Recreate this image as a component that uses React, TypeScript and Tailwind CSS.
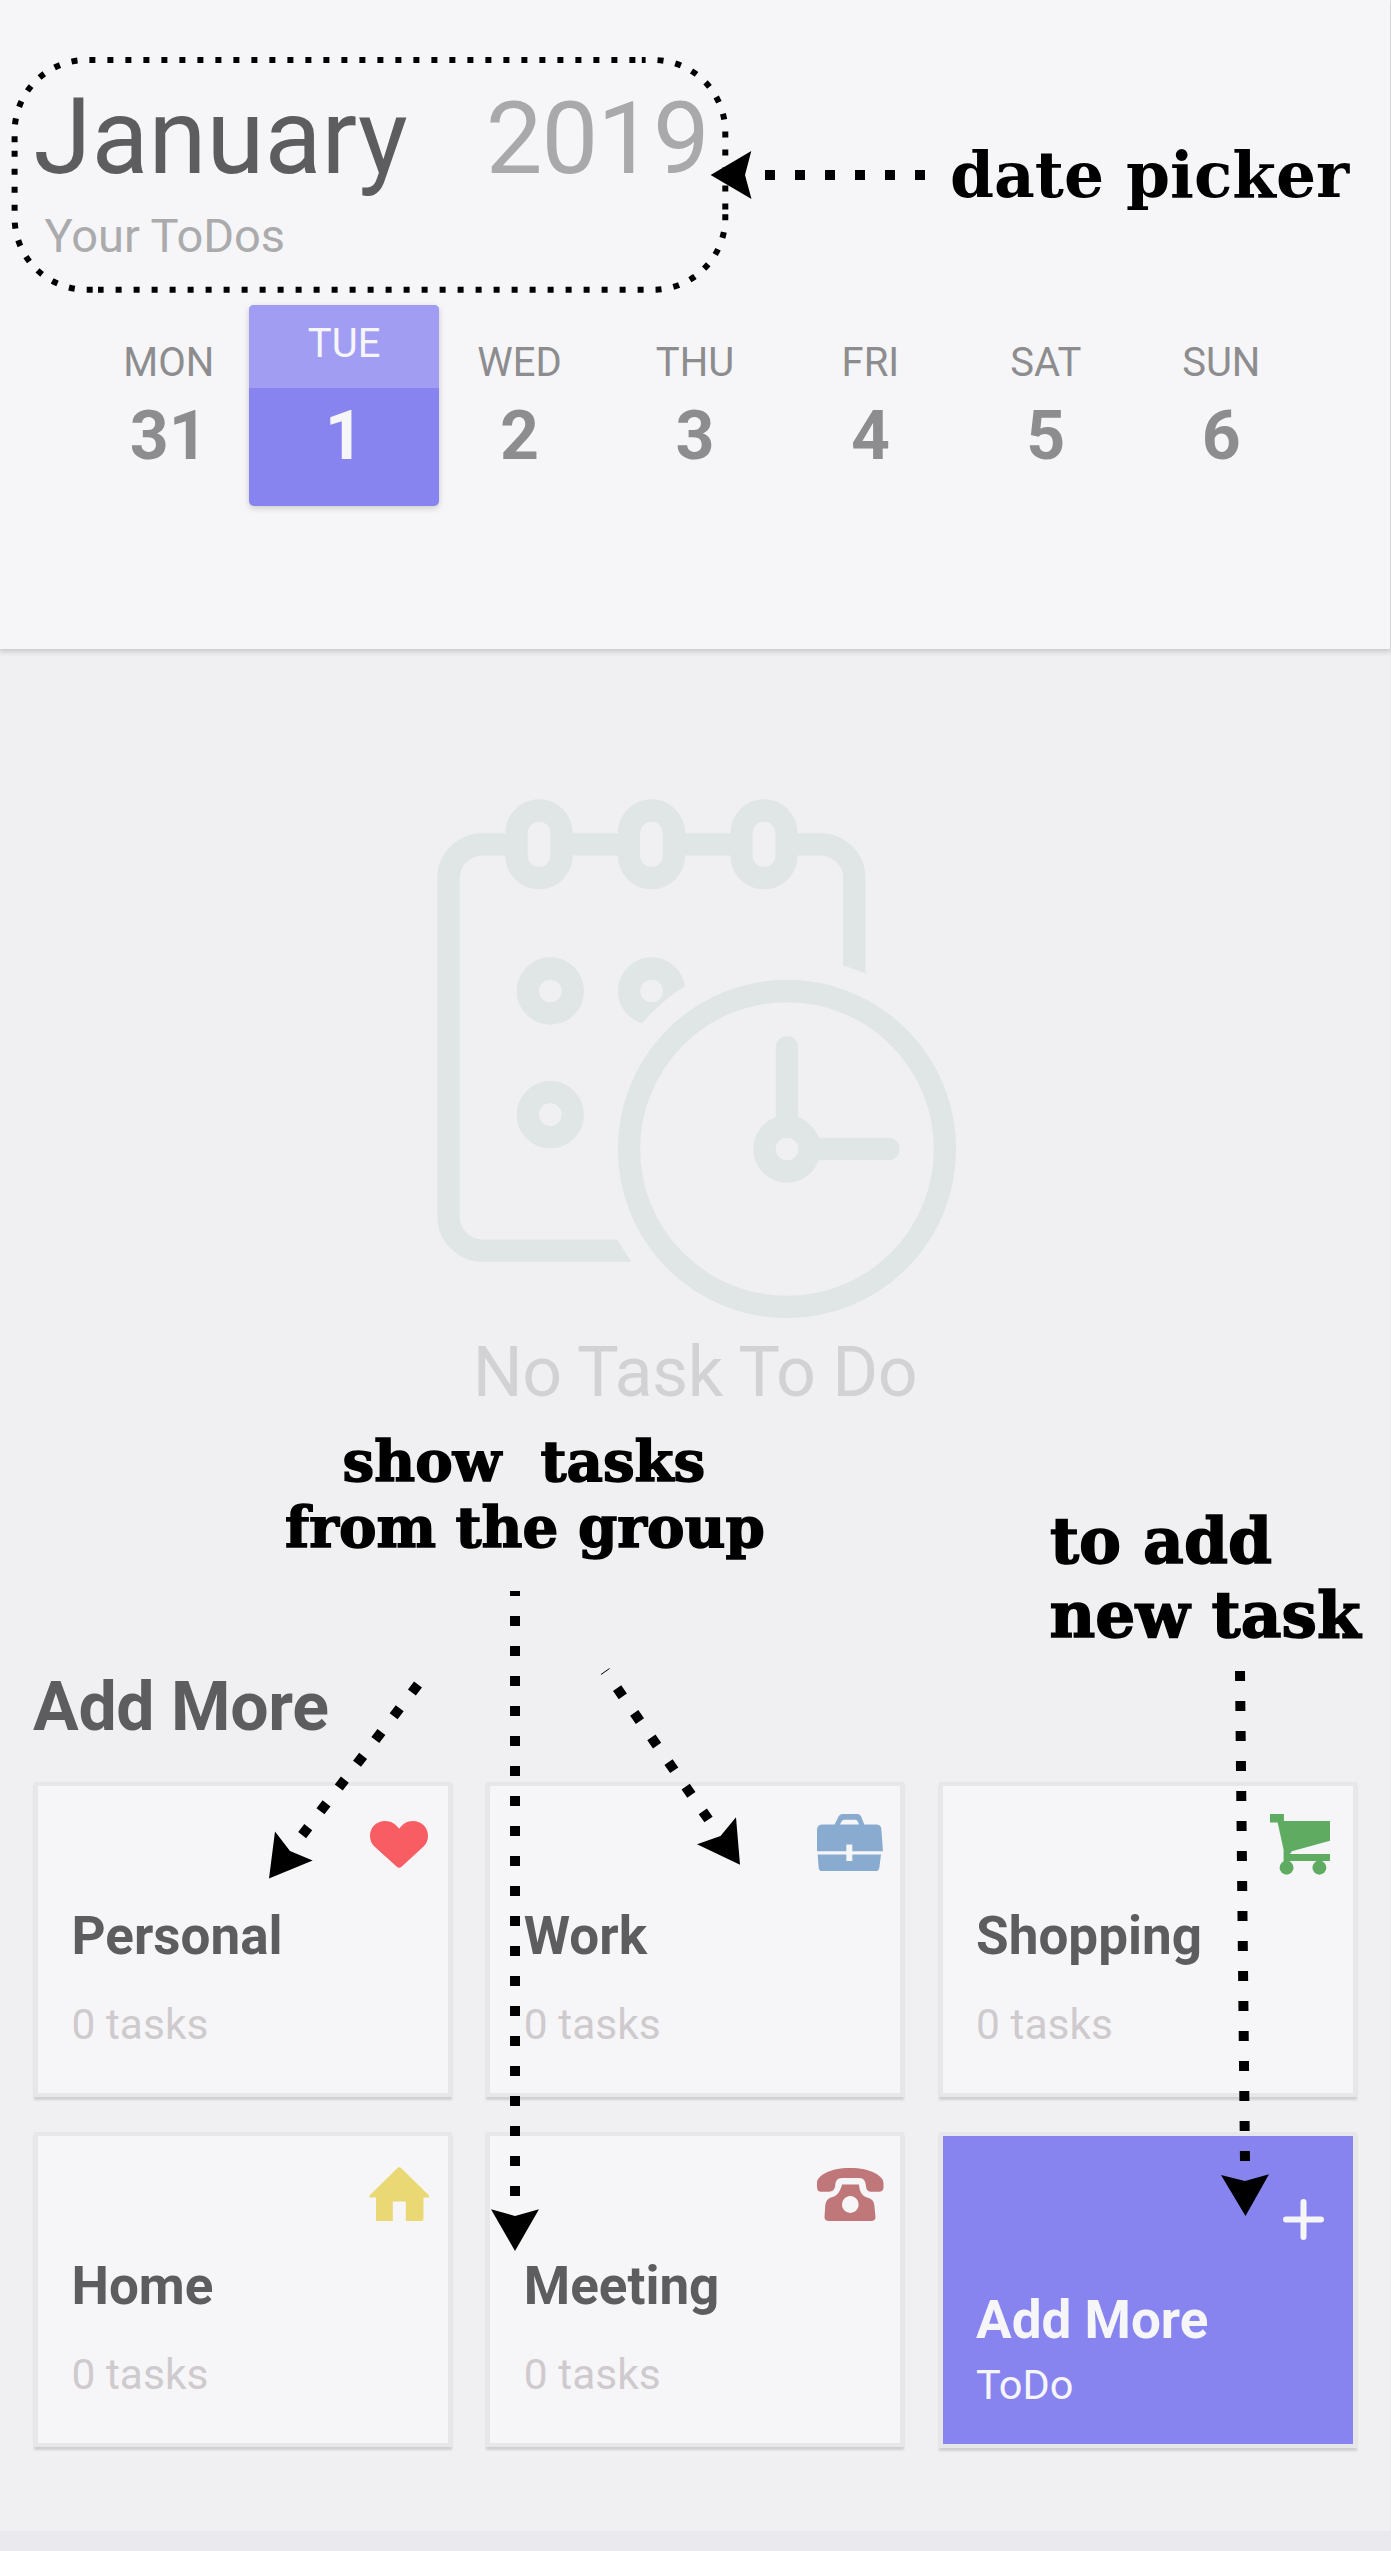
import type { ReactNode } from "react";

const days = [
  { name: "MON", date: "31" },
  { name: "TUE", date: "1", selected: true },
  { name: "WED", date: "2" },
  { name: "THU", date: "3" },
  { name: "FRI", date: "4" },
  { name: "SAT", date: "5" },
  { name: "SUN", date: "6" },
];

function Heart() {
  return (
    <svg viewBox="0 0 173 140" preserveAspectRatio="none" className="mt-[35px] mr-[20px] h-[47px] w-[58px]" fill="#f75d62">
      <path d="M87 23C76 8 62 0 45 0C19 0 0 20 0 44C0 58 5 68 14 77L80 136Q87 142 94 136L159 77C168 68 173 58 173 44C173 20 154 0 128 0C111 0 98 8 87 23Z" />
    </svg>
  );
}

function Briefcase() {
  return (
    <svg viewBox="0 0 198 170" preserveAspectRatio="none" className="mt-[28px] mr-[17px] h-[57px] w-[66px]" fill="#88abcf">
      <path
        fillRule="evenodd"
        d="M0 48Q0 31 17 31H53L65 7Q69 0 77 0H121Q128 0 132 7L142 31H177Q193 31 193 45L198 111H106V91H88V111H0ZM69 31H126Q122 17 115 17H82Q74 17 69 31Z"
      />
      <path d="M2 121H88V140H106V121H192L187 160Q185 170 177 170H15Q6 170 5 160Z" />
    </svg>
  );
}

function Cart() {
  return (
    <svg viewBox="0 0 181 182" preserveAspectRatio="none" className="mt-[28px] mr-[23px] h-[61px] w-[60px]" fill="#60ab62">
      <path d="M0 0H42V21H181V80L66 111L60 119H181V140H41V107L23 25H0Z" />
      <circle cx="50" cy="160" r="21" />
      <circle cx="149" cy="160" r="21" />
    </svg>
  );
}

function House() {
  return (
    <svg viewBox="0 0 60.5 54" className="mt-[31px] mr-[19px] h-[54px] w-[60.5px]" fill="#ead875">
      <path d="M28 1.5Q30.3-.8 32.6 1.5L60 28.5Q61 30.5 59 30.5H54.5V52Q54.5 54 52 54H36.8V34.5H23.8V54H7V30.5H1.5Q-.5 30.5 .5 28.5Z" />
    </svg>
  );
}

function Telephone() {
  return (
    <svg viewBox="0 0 66.5 53" className="mt-[32px] mr-[16.5px] h-[53px] w-[66.5px]" fill="#c0777a">
      <path d="M33 0C54 0 66.5 8 66.5 15V19Q66.5 23.7 62 23.7H53.5Q49.5 23.5 49 18.5C48.5 13 47 10 42 10H25C20 10 18.5 13 18.2 18Q17.5 23.7 12 23.7H4Q0 23.7 0 19V15C0 8 12 0 33 0Z" />
      <path
        fillRule="evenodd"
        d="M25 16.5H42C42.5 22 43.5 27 50 29.5Q57 31 57.3 37L58.5 49Q58.5 53 54 53H12Q7.5 53 7.5 49L8.3 37Q9 31 14 29.5C21 28 23.5 22.500 25 16.500ZM33.300 28A8.300 8.500 0 1 0 33.310 28Z"
      />
    </svg>
  );
}

function Plus() {
  return (
    <svg viewBox="0 0 41 41" className="mt-[63.5px] mr-[29px] h-[41px] w-[41px]" stroke="#f6f6f9" strokeWidth="6" strokeLinecap="round">
      <path d="M20.500 3V38M3 20.500H38" />
    </svg>
  );
}

const groups: { title: string; icon: ReactNode }[] = [
  { title: "Personal", icon: <Heart /> },
  { title: "Work", icon: <Briefcase /> },
  { title: "Shopping", icon: <Cart /> },
  { title: "Home", icon: <House /> },
  { title: "Meeting", icon: <Telephone /> },
];

function CalendarClock() {
  return (
    <svg viewBox="0 0 550 540" className="h-[540px] w-[550px]" fill="none" stroke="#dfe6e5" strokeWidth="22.3">
      <mask id="clock-gap" maskUnits="userSpaceOnUse" x="0" y="0" width="550" height="540">
        <rect width="550" height="540" fill="white" stroke="none" />
        <circle cx="367" cy="369" r="192" fill="black" stroke="none" />
      </mask>
      <mask id="ring-gap" maskUnits="userSpaceOnUse" x="0" y="0" width="550" height="540">
        <rect width="550" height="540" fill="white" stroke="none" />
        <g fill="black" stroke="none">
          <rect x="90" y="24" width="58" height="80" rx="28" />
          <rect x="203" y="24" width="58" height="80" rx="28" />
          <rect x="315" y="24" width="58" height="80" rx="28" />
        </g>
      </mask>
      <g mask="url(#clock-gap)">
        <rect x="28.500" y="64.300" width="405.800" height="406.300" rx="34" mask="url(#ring-gap)" />
        <circle cx="130.300" cy="211" r="22.500" />
        <circle cx="231.600" cy="211" r="22.500" />
        <circle cx="130.300" cy="334.700" r="22.500" />
      </g>
      <rect x="96.500" y="30.500" width="45" height="67.600" rx="22.500" />
      <rect x="209" y="30.500" width="45" height="67.600" rx="22.500" />
      <rect x="321.500" y="30.500" width="45" height="67.600" rx="22.500" />
      <circle cx="367" cy="369" r="158" />
      <circle cx="367" cy="369" r="22.500" />
      <path d="M367 340V267.500M396 369H468.500" strokeLinecap="round" />
    </svg>
  );
}

/* Tutorial overlay: dotted outline, arrows and captions over the screen. */
function Annotations() {
  return (
    <svg viewBox="0 0 1391 2551" className="pointer-events-none absolute inset-0 h-[2551px] w-[1391px]">
      <g fill="none" stroke="#000" strokeWidth="6" strokeDasharray="6 12">
        <path d="M14.600 142.300V132A72 72 0 0 1 86.600 60H640" />
        <path d="M641.800 60H653.300A72 72 0 0 1 725.300 132V210" strokeDashoffset="2.200" />
        <path d="M725.300 214.300V217.700A72 72 0 0 1 653.300 289.700H98" />
        <path d="M92.700 289.700H86.600A72 72 0 0 1 14.600 217.700V150" />
      </g>
      <g fill="none" stroke="#000" strokeWidth="10" strokeDasharray="10 20">
        <path d="M765 175H926" />
        <path d="M515 1596V1591" strokeDasharray="none" />
        <path d="M515 1616V2200" />
        <path d="M418 1684.500L302 1835.300" />
        <path d="M617.100 1688.200L712 1824.500" />
        <path d="M1240 1671L1245 2162" />
      </g>
      <path d="M601 1674.500L609.500 1668.500" stroke="#000" strokeWidth="1" />
      <g fill="#000">
        <path d="M710.600 175L751.300 151L745 175L751.500 199Z" />
        <path d="M515 2251L491 2209.300L515 2216L539 2209.300Z" />
        <path d="M269 1878.500L275 1831.500L290 1851L312.700 1860.500Z" />
        <path d="M740 1864.700L736 1817.300L720.500 1836L697 1844.300Z" />
        <path d="M1245.500 2216L1221 2175L1245 2181L1269 2174.300Z" />
      </g>
      <g className="font-['DejaVu_Serif',serif] font-bold">
        <text x="950" y="197" className="text-[63px]">date picker</text>
        <g stroke="#000" strokeWidth="1.500">
          <text x="342.600" y="1481" xmlSpace="preserve" className="text-[56.300px] whitespace-pre">{"show  tasks"}</text>
          <text x="285" y="1547" className="text-[56.300px]">from the group</text>
          <text x="1050" y="1563.300" className="text-[63px]">to add</text>
          <text x="1049.500" y="1637.300" className="text-[63px]">new task</text>
        </g>
      </g>
    </svg>
  );
}

export default function App() {
  return (
    <div className="relative h-[2551px] w-[1391px] overflow-hidden bg-[#e9e9ee] font-[Roboto,sans-serif]">
      <div className="flex h-[2531px] w-[1390px] flex-col bg-[#f0f0f2]">
        <header className="h-[648.500px] shrink-0 bg-[#f6f6f8] pt-[85px] shadow-[0_2px_5px_1px_rgba(0,0,0,0.16)]">
          <div className="flex h-[105px] items-baseline gap-[78px] pl-[33.500px] leading-none">
            <h1 className="text-[105px] leading-[105px] text-[#5d5d5f]">January</h1>
            <span className="text-[101px] tracking-[-1px] text-[#a9a9ab]">2019</span>
          </div>
          <p className="mt-[22px] pl-[44.500px] text-[47px] leading-[47px] text-[#ababad]">Your ToDos</p>
          <div className="mt-[46px] ml-[81px] grid w-[1228px] grid-cols-7 text-center">
            {days.map((d) =>
              d.selected ? (
                <div key={d.name} className="-mx-[7px] h-[201px] rounded-[5px] bg-[#8784ef] text-[#f6f6f9] shadow-[0_2px_6px_rgba(0,0,0,0.18)]">
                  <div className="h-[83px] rounded-t-[5px] bg-[#a09df2] pt-[19px] text-[40px] leading-[40px]">{d.name}</div>
                  <div className="pt-[14px] text-[68px] leading-[68px] font-bold">{d.date}</div>
                </div>
              ) : (
                <div key={d.name} className="pt-[38px] text-[#8d8d8f]">
                  <div className="text-[40px] leading-[40px]">{d.name}</div>
                  <div className="mt-[19px] text-[68px] leading-[68px] font-bold">{d.date}</div>
                </div>
              ),
            )}
          </div>
        </header>

        <main>
          <section className="flex flex-col items-center pt-[131.500px]">
            <CalendarClock />
            <p className="mt-[16.500px] text-[70px] leading-[70px] tracking-[-0.5px] text-[#d2d2d4]">No Task To Do</p>
          </section>

          <h2 className="mt-[266px] pl-[33px] text-[68px] leading-[68px] font-bold tracking-[-0.3px] text-[#5d5d5f]">Add More</h2>

          <section className="mt-[41.500px] ml-[34px] grid grid-cols-[418px_418px_418px] gap-x-[34.300px] gap-y-[34.500px]">
            {groups.map((g) => (
              <article key={g.title} className="h-[315px] border-4 border-[#e7e7e9] bg-[#f6f6f8] shadow-[0_3px_2px_#d0d0d3]">
                <div className="flex h-[124px] items-start justify-end">{g.icon}</div>
                <h3 className="pl-[33.500px] text-[53px] leading-[53px] font-bold text-[#5d5d5f]">{g.title}</h3>
                <p className="mt-[40px] pl-[33.500px] text-[42.500px] leading-[43px] text-[#cfcacd]">0 tasks</p>
              </article>
            ))}
            <article className="h-[316px] border-4 border-[#e7e7e9] bg-[#8784ef] text-[#f6f6f9] shadow-[0_3px_2px_#d0d0d3]">
              <div className="flex h-[158.500px] items-start justify-end">
                <Plus />
              </div>
              <h3 className="pl-[33.500px] text-[53px] leading-[53px] font-bold">Add More</h3>
              <p className="mt-[17px] pl-[33.500px] text-[41.500px] leading-[41px]">ToDo</p>
            </article>
          </section>
        </main>
      </div>
      <Annotations />
    </div>
  );
}
